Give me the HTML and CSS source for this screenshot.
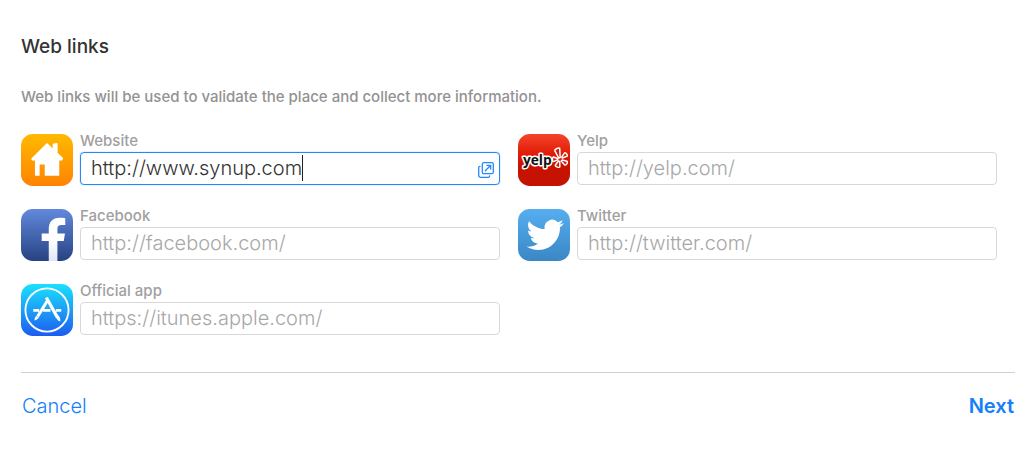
FILE: index.html
```html
<!DOCTYPE html>
<html lang="en">
<head>
<meta charset="utf-8">
<title>Web links</title>
<link rel="stylesheet" href="styles.css">
</head>
<body>
<form class="page">
  <h1 class="title">Web links</h1>
  <p class="intro">Web links will be used to validate the place and collect more information.</p>
  <div class="links">
    <div class="link">
      <svg class="logo" viewBox="0 0 53 53" aria-hidden="true">
        <defs><linearGradient id="home" x2="0" y2="1"><stop stop-color="#ffb900"/><stop offset="1" stop-color="#ff8303"/></linearGradient></defs>
        <rect width="53" height="53" rx="12" fill="url(#home)"/>
        <path fill="#fff" d="M26.500 9.300 32.300 14.500V11q0-1 1-1.200l3-.5q1 0 1 1v8.700l5.500 5.500q.5 1-1 2.500H39v15.500H24.200V31H19v11.500H14.200V27H11.300q-1.200-1.500-.8-2z"/>
      </svg>
      <div class="entry">
        <label class="label" for="website">Website</label>
        <div class="field field-active">
          <input class="input input-fit" id="website" type="text" value="http://www.synup.com">
          <span class="caret"></span>
          <button class="open" type="button" aria-label="Open website">
            <svg class="open-icon" viewBox="0 0 16 16" aria-hidden="true"><g fill="none" stroke="#2488fb" stroke-width="1.300" stroke-linecap="round" stroke-linejoin="round"><rect x="4.300" y=".7" width="11" height="11" rx="1.500"/><path d="M2 4.400C1.100 4.500.7 5 .7 5.800v7.700c0 1.100.7 1.800 1.800 1.800h7.700c.8 0 1.300-.4 1.400-1.300M7.300 8.700l5.200-5.200M8.900 3.300h3.800v3.800"/></g></svg>
          </button>
        </div>
      </div>
    </div>
    <div class="link">
      <svg class="logo" viewBox="0 0 53 53" aria-hidden="true">
        <defs><linearGradient id="yelp" x2="0" y2="1"><stop stop-color="#f5442a"/><stop offset=".4" stop-color="#e01a05"/><stop offset=".6" stop-color="#c91200"/><stop offset="1" stop-color="#c41200"/></linearGradient></defs>
        <rect width="53" height="53" rx="12" fill="url(#yelp)"/>
        <text class="yelp-word" x="5" y="32">yelp</text>
        <g fill="#d01c0c" stroke="#fff" stroke-width="1.500" stroke-linejoin="round">
          <path d="M41.500 24.500 37.500 17c-.5-1.500 3.500-3 5-2.500l.5 9.500z"/>
          <path d="m44.500 23.500 3-4.300c1-.8 3.200 2.300 2.700 3.300l-5 2z"/>
          <path d="m45 26.500 4.900 1.200c1.500.8-.8 4.300-2.300 4L44 27.500z"/>
          <path d="m42.500 28 .2 5.400c-.5 1.500-4.500 0-4.700-1.500l3.200-4.400z"/>
          <path d="m40.500 26.200-4.400 1.900c-1.300 0-1.300-4.300 0-4.700l4.400 1.600z"/>
        </g>
      </svg>
      <div class="entry">
        <label class="label" for="yelp-url">Yelp</label>
        <div class="field"><input class="input" id="yelp-url" type="text" placeholder="http://yelp.com/"></div>
      </div>
    </div>
    <div class="link">
      <svg class="logo" viewBox="0 0 53 53" aria-hidden="true">
        <defs>
          <linearGradient id="fb" x2="0" y2="1"><stop stop-color="#6189dc"/><stop offset="1" stop-color="#284283"/></linearGradient>
          <linearGradient id="fbf" x2="0" y2="1"><stop stop-color="#fff"/><stop offset=".5" stop-color="#fff"/><stop offset="1" stop-color="#dfe7f7"/></linearGradient>
        </defs>
        <rect width="53" height="53" rx="12" fill="url(#fb)"/>
        <path fill="url(#fbf)" d="M28.300 53V32.500h-7.200V25h7.200v-4.500C28.300 13 32.500 9 39 9c2.300 0 4.500.1 6.100.5v6.900h-4c-3 0-4 1.400-4 4V25h7.700l-1.200 7.500h-6.500V53z"/>
      </svg>
      <div class="entry">
        <label class="label" for="facebook">Facebook</label>
        <div class="field"><input class="input" id="facebook" type="text" placeholder="http://facebook.com/"></div>
      </div>
    </div>
    <div class="link">
      <svg class="logo" viewBox="0 0 53 53" aria-hidden="true">
        <defs><linearGradient id="tw" x2="0" y2="1"><stop stop-color="#55aef0"/><stop offset="1" stop-color="#3a87c5"/></linearGradient></defs>
        <rect width="53" height="53" rx="12" fill="url(#tw)"/>
        <path fill="#fff" transform="translate(8.700 7.400) scale(1.580)" d="M23.953 4.570a10 10 0 01-2.825.775 4.958 4.958 0 002.163-2.723c-.951.555-2.005.959-3.127 1.184a4.920 4.920 0 00-8.384 4.482C7.690 8.095 4.067 6.130 1.640 3.162a4.822 4.822 0 00-.666 2.475c0 1.710.870 3.213 2.188 4.096a4.904 4.904 0 01-2.228-.616v.06a4.923 4.923 0 003.946 4.827 4.996 4.996 0 01-2.212.085 4.936 4.936 0 004.604 3.417 9.867 9.867 0 01-6.102 2.105c-.390 0-.779-.023-1.170-.067a13.995 13.995 0 007.557 2.209c9.053 0 13.998-7.496 13.998-13.985 0-.210 0-.420-.015-.630A9.935 9.935 0 0024 4.590z"/>
      </svg>
      <div class="entry">
        <label class="label" for="twitter">Twitter</label>
        <div class="field"><input class="input" id="twitter" type="text" placeholder="http://twitter.com/"></div>
      </div>
    </div>
    <div class="link">
      <svg class="logo" viewBox="0 0 53 53" aria-hidden="true">
        <defs><linearGradient id="app" x2="0" y2="1"><stop stop-color="#1ae1fd"/><stop offset="1" stop-color="#1d5cf0"/></linearGradient></defs>
        <rect width="53" height="53" rx="12" fill="url(#app)"/>
        <circle cx="26.500" cy="26.500" r="22" fill="none" stroke="#fff" stroke-width="1.900"/>
        <path fill="none" stroke="#fff" stroke-width="2.800" d="M12.500 26.800h6M22.500 26.800h7.500M35.500 26.800h5.500"/>
        <path fill="none" stroke="#fff" stroke-width="3.200" d="M25.800 13.800 36.800 33.500"/>
        <path fill="none" stroke="#fff" stroke-width="3" d="M27.200 16.500 17 33"/>
        <path fill="#fff" d="m35.300 34 3.200-1.800 1.500 3.300.1 2.600-2.400-1zM15.400 32.300l3 1.900-2.600 2.300-2 .8.100-2.200z"/>
      </svg>
      <div class="entry">
        <label class="label" for="app-url">Official app</label>
        <div class="field"><input class="input" id="app-url" type="text" placeholder="https://itunes.apple.com/"></div>
      </div>
    </div>
  </div>
  <div class="actions">
    <button class="action" type="button">Cancel</button>
    <button class="action action-main" type="submit">Next</button>
  </div>
</form>
</body>
</html>
```
FILE: styles.css
```css
* { box-sizing: border-box; }
body {
  margin: 0;
  background: #fff;
  color: #333;
  font-family: Inter, "Liberation Sans", sans-serif;
}
.page { padding: 35px 15px 32px 21px; }
.title {
  margin: 0;
  font-size: 19px;
  font-weight: 500;
  line-height: 24px;
}
.intro {
  margin: 27px 0 26px;
  color: #929292;
  font-size: 15px;
  font-weight: 500;
  line-height: 22px;
}
.links {
  display: grid;
  grid-template-columns: 1fr 1fr;
  gap: 23px 18px;
  padding-right: 18px;
}
.link {
  display: flex;
  gap: 7px;
  min-width: 0;
}
.logo {
  flex: none;
  width: 52px;
  height: 52px;
}
.entry { flex: 1; min-width: 0; }
.label {
  display: block;
  margin-bottom: 5px;
  color: #a0a0a0;
  font-size: 15px;
  font-weight: 500;
  line-height: 13px;
}
.field {
  display: flex;
  align-items: center;
  height: 33px;
  padding: 0 5px 2px 10px;
  border: 1px solid #d8d8d8;
  border-radius: 4px;
}
.field-active {
  border-color: #2488fb;
  box-shadow: 0 0 1px #2488fb;
}
.input {
  flex: 1;
  min-width: 0;
  padding: 0;
  border: 0;
  outline: 0;
  background: transparent;
  color: #333;
  font: 300 20px/26px Inter, "Liberation Sans", sans-serif;
}
.input::placeholder { color: #a8a8a8; opacity: 1; }
.input-fit { flex: none; field-sizing: content; max-width: 90%; }
.caret {
  width: 1px;
  height: 26px;
  background: #222;
}
.open {
  display: flex;
  margin: 5px 0 0 auto;
  padding: 0;
  border: 0;
  background: none;
}
.open-icon { width: 16px; height: 16px; }
.yelp-word {
  fill: #111;
  stroke: #fff;
  stroke-width: 3px;
  stroke-linejoin: round;
  paint-order: stroke;
  font: 700 14px "Open Sans", sans-serif;
}
.actions {
  display: flex;
  justify-content: space-between;
  margin-top: 36px;
  padding-top: 20px;
  border-top: 1px solid #d0d0d0;
}
.action {
  padding: 0 1px;
  border: 0;
  background: none;
  color: #1680fb;
  font: 300 20px/26px Inter, "Liberation Sans", sans-serif;
}
.action-main { font-weight: 600; }
```
